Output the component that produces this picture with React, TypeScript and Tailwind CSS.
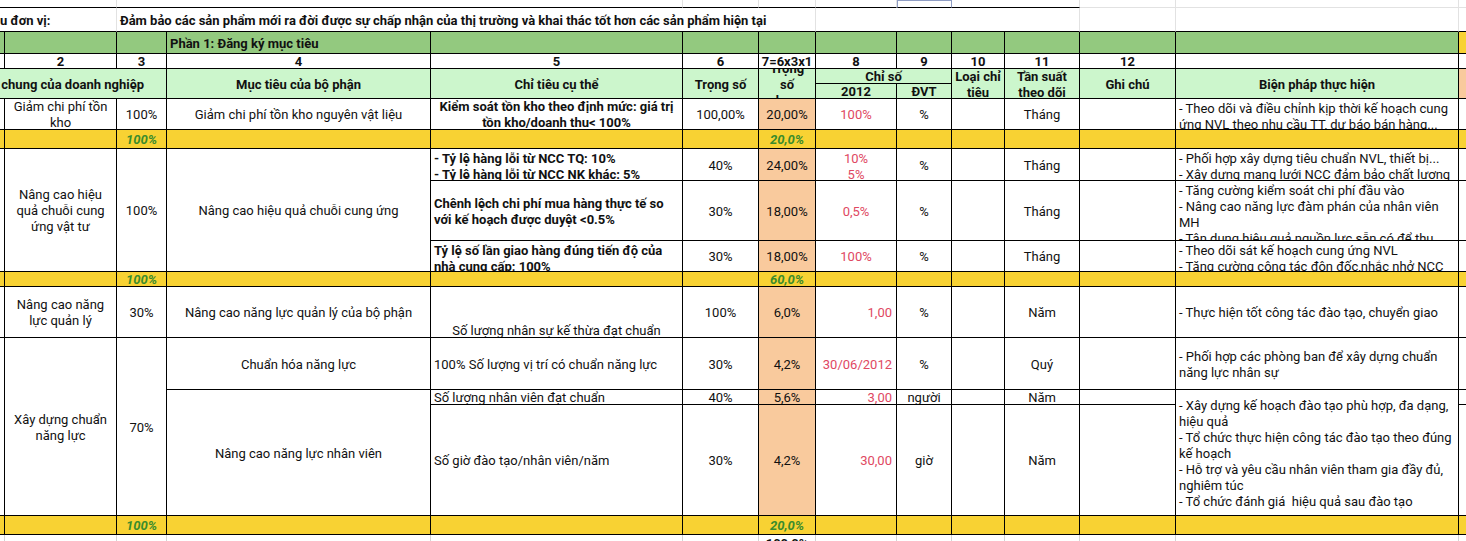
import type { ReactNode } from "react";
import { twMerge } from "tailwind-merge";

function Cell({ className, children }: { className?: string; children?: ReactNode }) {
  return (
    <div
      className={twMerge(
        "flex items-center justify-center overflow-hidden border-r border-b border-black pt-[2px] text-center leading-4",
        className
      )}
    >
      {children}
    </div>
  );
}

const left = "justify-start text-left pl-[3px]";
const red = "text-[#e04862]";
const peach = "bg-[#f9ca9d]";
const green = "bg-[#93c97f]";
const head = "bg-[#ccf6cc] font-bold";
const yel = "bg-[#f8d233]";
const sum = "font-bold italic text-[#3a8c2c]";
const grey = "border-r-[#e2e2e2]";

function SumRow({ a, b }: { a: string; b: string }) {
  return (
    <>
      <Cell className={yel} />
      <Cell className={yel} />
      <Cell className={twMerge(yel, sum)}>{a}</Cell>
      <Cell className={yel} />
      <Cell className={yel} />
      <Cell className={yel} />
      <Cell className={twMerge(yel, sum)}>{b}</Cell>
      <Cell className={yel} />
      <Cell className={yel} />
      <Cell className={yel} />
      <Cell className={yel} />
      <Cell className={yel} />
      <Cell className={yel} />
      <Cell className={twMerge(yel, "border-r-0")} />
    </>
  );
}

export default function App() {
  return (
    <div className="h-[541px] w-[1466px] overflow-hidden bg-white font-['Roboto',sans-serif] text-[13px] text-[#111]">
      <div className="grid grid-cols-[5px_112px_50px_264px_252px_76px_57px_81px_55px_53px_75px_96px_283px_7px] grid-rows-[8px_24px_22px_15px_15px_15px_31px_19px_32px_60px_31px_15px_51px_52px_15px_111px_19px_20px]">
        {/* top blank row */}
        <Cell className={twMerge("col-span-2", grey)} />
        <Cell className={twMerge("col-span-3", grey)} />
        <Cell className={grey} />
        <Cell className={grey} />
        <Cell className={grey} />
        <Cell className="border-l border-t border-[#8f9dc4] border-b-black" />
        <Cell className={twMerge("col-span-2", grey)} />
        <Cell className={twMerge(grey, "border-b-[#e2e2e2]")} />
        <Cell className={twMerge(grey, "border-b-[#e2e2e2]")} />
        <Cell className="border-r-0 border-b-[#e2e2e2]" />

        {/* title row */}
        <Cell className={twMerge("col-span-2 justify-start whitespace-nowrap font-bold", grey)}>u đơn vị:</Cell>
        <Cell className={twMerge("col-span-5 whitespace-nowrap font-bold", left, grey)}>
          Đảm bảo các sản phẩm mới ra đời được sự chấp nhận của thị trường và khai thác tốt hơn các sản phẩm hiện tại
        </Cell>
        <Cell className={twMerge("col-span-4", grey)} />
        <Cell className={grey} />
        <Cell className={grey} />
        <Cell className="border-r-0" />

        {/* green section row */}
        <Cell className={green} />
        <Cell className={green} />
        <Cell className={green} />
        <Cell className={twMerge(green, left, "font-bold")}>Phần 1: Đăng ký mục tiêu</Cell>
        <Cell className={green} />
        <Cell className={green} />
        <Cell className={green} />
        <Cell className={green} />
        <Cell className={green} />
        <Cell className={green} />
        <Cell className={green} />
        <Cell className={green} />
        <Cell className={green} />
        <Cell className={twMerge(yel, "border-r-0")} />

        {/* column numbers */}
        <Cell />
        <Cell className="font-bold">2</Cell>
        <Cell className="font-bold">3</Cell>
        <Cell className="font-bold">4</Cell>
        <Cell className="font-bold">5</Cell>
        <Cell className="font-bold">6</Cell>
        <Cell className="font-bold">7=6x3x1</Cell>
        <Cell className="font-bold">8</Cell>
        <Cell className="font-bold">9</Cell>
        <Cell className="font-bold">10</Cell>
        <Cell className="font-bold">11</Cell>
        <Cell className="font-bold">12</Cell>
        <Cell />
        <Cell className="border-r-0" />

        {/* header */}
        <Cell className={twMerge(head, "col-span-3 row-span-2 justify-end whitespace-nowrap pr-[22px]")}>
          chung của doanh nghiệp
        </Cell>
        <Cell className={twMerge(head, "row-span-2")}>Mục tiêu của bộ phận</Cell>
        <Cell className={twMerge(head, "row-span-2")}>Chỉ tiêu cụ thể</Cell>
        <Cell className={twMerge(head, "row-span-2")}>Trọng số</Cell>
        <Cell className={twMerge(head, "row-span-2")}>
          Trọng
          <br />
          số
          <br />
          chung
        </Cell>
        <Cell className={twMerge(head, "col-span-2")}>Chỉ số</Cell>
        <Cell className={twMerge(head, "row-span-2")}>
          Loại chỉ
          <br />
          tiêu
        </Cell>
        <Cell className={twMerge(head, "row-span-2")}>
          Tần suất
          <br />
          theo dõi
        </Cell>
        <Cell className={twMerge(head, "row-span-2")}>Ghi chú</Cell>
        <Cell className={twMerge(head, "row-span-2")}>Biện pháp thực hiện</Cell>
        <Cell className={twMerge(peach, "row-span-2 border-r-0")} />
        <Cell className={head}>2012</Cell>
        <Cell className={head}>ĐVT</Cell>

        {/* Giảm chi phí tồn kho */}
        <Cell />
        <Cell>
          Giảm chi phí tồn
          <br />
          kho
        </Cell>
        <Cell>100%</Cell>
        <Cell>Giảm chi phí tồn kho nguyên vật liệu</Cell>
        <Cell className="font-bold">
          Kiểm soát tồn kho theo định mức: giá trị
          <br />
          tồn kho/doanh thu&lt; 100%
        </Cell>
        <Cell>100,00%</Cell>
        <Cell className={peach}>20,00%</Cell>
        <Cell className={red}>100%</Cell>
        <Cell>%</Cell>
        <Cell />
        <Cell>Tháng</Cell>
        <Cell />
        <Cell className={twMerge(left, "items-start")}>
          <div>
            - Theo dõi và điều chỉnh kịp thời kế hoạch cung
            <br />
            ứng NVL theo nhu cầu TT, dự báo bán hàng...
          </div>
        </Cell>
        <Cell className="border-r-0" />

        <SumRow a="100%" b="20,0%" />

        {/* Nâng cao hiệu quả chuỗi cung ứng */}
        <Cell className="row-span-3" />
        <Cell className="row-span-3">
          Nâng cao hiệu
          <br />
          quả chuỗi cung
          <br />
          ứng vật tư
        </Cell>
        <Cell className="row-span-3">100%</Cell>
        <Cell className="row-span-3">Nâng cao hiệu quả chuỗi cung ứng</Cell>

        <Cell className={twMerge(left, "items-start font-bold")}>
          <div>
            - Tỷ lệ hàng lỗi từ NCC TQ: 10%
            <br />- Tỷ lệ hàng lỗi từ NCC NK khác: 5%
          </div>
        </Cell>
        <Cell>40%</Cell>
        <Cell className={peach}>24,00%</Cell>
        <Cell className={twMerge(red, "items-start")}>
          <div>
            10%
            <br />
            5%
          </div>
        </Cell>
        <Cell>%</Cell>
        <Cell />
        <Cell>Tháng</Cell>
        <Cell />
        <Cell className={twMerge(left, "items-start")}>
          <div>
            - Phối hợp xây dựng tiêu chuẩn NVL, thiết bị...
            <br />- Xây dựng mạng lưới NCC đảm bảo chất lượng
          </div>
        </Cell>
        <Cell className="border-r-0" />

        <Cell className={twMerge(left, "font-bold")}>
          <div>
            Chênh lệch chi phí mua hàng thực tế so
            <br />
            với kế hoạch được duyệt &lt;0.5%
          </div>
        </Cell>
        <Cell>30%</Cell>
        <Cell className={peach}>18,00%</Cell>
        <Cell className={red}>0,5%</Cell>
        <Cell>%</Cell>
        <Cell />
        <Cell>Tháng</Cell>
        <Cell />
        <Cell className={twMerge(left, "items-start")}>
          <div>
            - Tăng cường kiểm soát chi phí đầu vào
            <br />- Nâng cao năng lực đàm phán của nhân viên
            <br />
            MH
            <br />- Tận dụng hiệu quả nguồn lực sẵn có để thu
          </div>
        </Cell>
        <Cell className="border-r-0" />

        <Cell className={twMerge(left, "items-start font-bold")}>
          <div>
            Tỷ lệ số lần giao hàng đúng tiến độ của
            <br />
            nhà cung cấp: 100%
          </div>
        </Cell>
        <Cell>30%</Cell>
        <Cell className={peach}>18,00%</Cell>
        <Cell className={red}>100%</Cell>
        <Cell>%</Cell>
        <Cell />
        <Cell>Tháng</Cell>
        <Cell />
        <Cell className={twMerge(left, "items-start")}>
          <div>
            - Theo dõi sát kế hoạch cung ứng NVL
            <br />- Tăng cường công tác đôn đốc,nhắc nhở NCC
          </div>
        </Cell>
        <Cell className="border-r-0" />

        <SumRow a="100%" b="60,0%" />

        {/* Nâng cao năng lực quản lý */}
        <Cell />
        <Cell>
          Nâng cao năng
          <br />
          lực quản lý
        </Cell>
        <Cell>30%</Cell>
        <Cell>Nâng cao năng lực quản lý của bộ phận</Cell>
        <Cell className="items-end">
          <div className="-mb-[2px]">Số lượng nhân sự kế thừa đạt chuẩn</div>
        </Cell>
        <Cell>100%</Cell>
        <Cell className={peach}>6,0%</Cell>
        <Cell className={twMerge(red, "justify-end pr-[4px]")}>1,00</Cell>
        <Cell>%</Cell>
        <Cell />
        <Cell>Năm</Cell>
        <Cell />
        <Cell className={left}>- Thực hiện tốt công tác đào tạo, chuyển giao</Cell>
        <Cell className="border-r-0" />

        {/* Xây dựng chuẩn năng lực */}
        <Cell className="row-span-3" />
        <Cell className="row-span-3">
          Xây dựng chuẩn
          <br />
          năng lực
        </Cell>
        <Cell className="row-span-3">70%</Cell>

        <Cell>Chuẩn hóa năng lực</Cell>
        <Cell className={left}>100% Số lượng vị trí có chuẩn năng lực</Cell>
        <Cell>30%</Cell>
        <Cell className={peach}>4,2%</Cell>
        <Cell className={twMerge(red, "justify-end pr-[4px]")}>30/06/2012</Cell>
        <Cell>%</Cell>
        <Cell />
        <Cell>Quý</Cell>
        <Cell />
        <Cell className={left}>
          <div>
            - Phối hợp các phòng ban để xây dựng chuẩn
            <br />
            năng lực nhân sự
          </div>
        </Cell>
        <Cell className="border-r-0" />

        <Cell className="row-span-2">Nâng cao năng lực nhân viên</Cell>
        <Cell className={twMerge(left, "whitespace-nowrap")}>Số lượng nhân viên đạt chuẩn</Cell>
        <Cell>40%</Cell>
        <Cell className={peach}>5,6%</Cell>
        <Cell className={twMerge(red, "justify-end pr-[4px]")}>3,00</Cell>
        <Cell>người</Cell>
        <Cell />
        <Cell>Năm</Cell>
        <Cell />
        <Cell className={twMerge(left, "row-span-2")}>
          <div>
            - Xây dựng kế hoạch đào tạo phù hợp, đa dạng,
            <br />
            hiệu quả
            <br />- Tổ chức thực hiện công tác đào tạo theo đúng
            <br />
            kế hoạch
            <br />- Hỗ trợ và yêu cầu nhân viên tham gia đầy đủ,
            <br />
            nghiêm túc
            <br />- Tổ chức đánh giá&nbsp; hiệu quả sau đào tạo
          </div>
        </Cell>
        <Cell className="border-r-0" />

        <Cell className={left}>Số giờ đào tạo/nhân viên/năm</Cell>
        <Cell>30%</Cell>
        <Cell className={peach}>4,2%</Cell>
        <Cell className={twMerge(red, "justify-end pr-[4px]")}>30,00</Cell>
        <Cell>giờ</Cell>
        <Cell />
        <Cell>Năm</Cell>
        <Cell />
        <Cell className="border-r-0" />

        <SumRow a="100%" b="20,0%" />

        {/* grand total, cut by the window */}
        <Cell className="border-r-[#d4d4d4] border-b-0" />
        <Cell className="border-r-[#d4d4d4] border-b-0" />
        <Cell className="border-r-[#d4d4d4] border-b-0" />
        <Cell className="border-r-[#d4d4d4] border-b-0" />
        <Cell className="border-r-[#d4d4d4] border-b-0" />
        <Cell className="border-r-[#d4d4d4] border-b-0" />
        <Cell className="items-start border-r-[#d4d4d4] border-b-0 pt-[1px] font-bold">100,0%</Cell>
        <Cell className="border-r-[#d4d4d4] border-b-0" />
        <Cell className="border-r-[#d4d4d4] border-b-0" />
        <Cell className="border-r-[#d4d4d4] border-b-0" />
        <Cell className="border-r-[#d4d4d4] border-b-0" />
        <Cell className="border-r-[#d4d4d4] border-b-0" />
        <Cell className="border-r-[#d4d4d4] border-b-0" />
        <Cell className="border-r-0 border-b-0" />
      </div>
    </div>
  );
}
